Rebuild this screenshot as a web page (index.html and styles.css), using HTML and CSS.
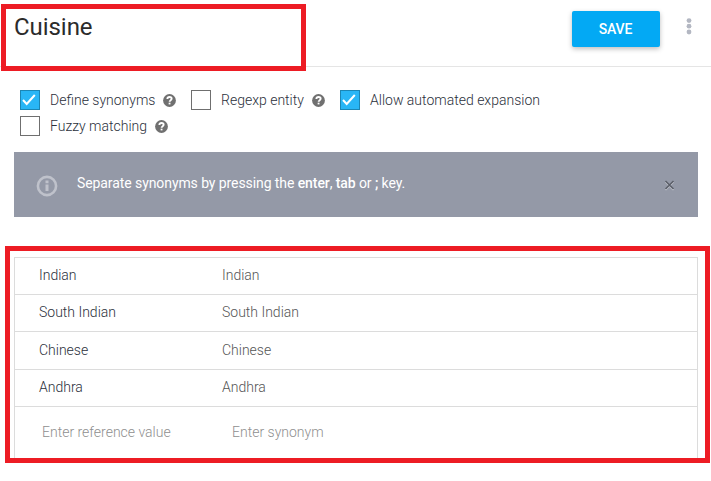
FILE: index.html
```html
<!DOCTYPE html>
<html lang="en">
<head>
<meta charset="utf-8">
<title>Cuisine</title>
<link rel="stylesheet" href="styles.css">
</head>
<body>
<svg class="defs" width="0" height="0" aria-hidden="true">
  <symbol id="help" viewBox="0 0 12 12"><circle cx="6" cy="6" r="5.9" fill="#707070"/><path d="M4 4.6C4.1 3.3 4.9 2.8 6 2.8c1.2 0 2 .6 2 1.6C8 5.7 6.1 5.7 6.1 7.2" fill="none" stroke="#fff" stroke-width="1.7"/><path d="M5.2 8h1.7v1.6H5.2z" fill="#fff"/></symbol>
  <symbol id="check" viewBox="0 0 18 18"><path d="M2 9l3.7 4L13.8 4" fill="none" stroke="#fff" stroke-width="2"/></symbol>
</svg>
<header class="header">
  <h1 class="title">Cuisine</h1>
  <button class="save">SAVE</button>
  <svg class="more" width="6" height="18" viewBox="0 0 6 18" fill="#b3b7c2"><circle cx="3" cy="2.6" r="2.4"/><circle cx="3" cy="8.2" r="2.4"/><circle cx="3" cy="14" r="2.4"/></svg>
</header>
<main class="content">
  <div class="options">
    <div class="option option-synonyms"><span class="box checked"><svg width="18" height="18"><use href="#check"/></svg></span><span>Define synonyms</span><svg class="help" width="13" height="13"><use href="#help"/></svg></div>
    <div class="option option-regexp"><span class="box"></span><span>Regexp entity</span><svg class="help" width="13" height="13"><use href="#help"/></svg></div>
    <div class="option option-expansion"><span class="box checked"><svg width="18" height="18"><use href="#check"/></svg></span><span>Allow automated expansion</span></div>
    <div class="option"><span class="box"></span><span>Fuzzy matching</span><svg class="help" width="13" height="13"><use href="#help"/></svg></div>
  </div>
  <div class="notice">
    <svg width="22" height="22" viewBox="0 0 22 22"><circle cx="11" cy="11" r="9.1" fill="none" stroke="#bfc2cb" stroke-width="2.6"/><path d="M9.5 5.6h3v2.6h-3zM9.5 9.6h3v6.3h-3z" fill="#bfc2cb"/></svg>
    <p class="notice-text">Separate synonyms by pressing the <b>enter</b>, <b>tab</b> or <b>;</b> key.</p>
    <svg class="close" width="12" height="13" viewBox="0 0 12 13" fill="none" stroke-width="1.5"><path d="M1.5 3l8 8M9.5 3l-8 8" stroke="#c3c6ce"/><path d="M1.5 2l8 8M9.5 2l-8 8" stroke="#595d67"/></svg>
  </div>
  <div class="entries">
    <div class="row"><span>Indian</span><span class="synonym">Indian</span></div>
    <div class="row"><span>South Indian</span><span class="synonym">South Indian</span></div>
    <div class="row tall"><span>Chinese</span><span class="synonym">Chinese</span></div>
    <div class="row"><span>Andhra</span><span class="synonym">Andhra</span></div>
    <div class="row entry-new"><span>Enter reference value</span><span>Enter synonym</span></div>
  </div>
</main>
<div class="highlight highlight-title"></div>
<div class="highlight highlight-entries"></div>
</body>
</html>
```
FILE: styles.css
```css
* { box-sizing: border-box; }
body {
  margin: 0;
  height: 481px;
  position: relative;
  overflow: hidden;
  background: #fff;
  color: #2b303b;
  font: 300 14px/20px Roboto, sans-serif;
}
.defs { position: absolute; }
.header {
  display: flex;
  align-items: flex-start;
  height: 67px;
  padding: 11px 19px 0 14px;
  border-bottom: 1px solid #e5e5e5;
}
.title {
  flex: 1;
  margin: 0;
  color: #2b2b2b;
  font-size: 24px;
  line-height: 32px;
  font-weight: 400;
  letter-spacing: -.05px;
}
.save {
  width: 88px;
  height: 36px;
  padding: 0 1px 0 0;
  border: 0;
  border-radius: 2px;
  background: #03a9f4;
  box-shadow: 0 2px 5px rgba(0, 0, 0, .26);
  color: #fff;
  font: 500 14px/34px Roboto, sans-serif;
  letter-spacing: -.1px;
}
.more { margin: 7px 0 0 26px; }
.content { padding: 23px 13px 0 14px; }
.options {
  display: flex;
  flex-wrap: wrap;
  row-gap: 6px;
  padding-left: 6px;
}
.option {
  display: flex;
  align-items: center;
  height: 20px;
  white-space: nowrap;
}
.option-synonyms { width: 171px; }
.option-regexp { width: 149px; }
.option-expansion { width: 300px; }
.box {
  width: 20px;
  height: 20px;
  margin-right: 10px;
  border: 1px solid #6f6f6f;
}
.checked { background: #29b6f6; border-color: #1c86b5; }
.box svg { display: block; }
.help { margin-left: 8px; }
.notice {
  display: flex;
  align-items: flex-start;
  height: 65px;
  margin-top: 16px;
  padding: 23px 22px 0;
  background: #9499a7;
  color: #fff;
}
.notice-text {
  flex: 1;
  margin: -2px 0 0 19px;
  font-weight: 400;
  letter-spacing: -.085px;
}
.notice b { font-weight: 500; }
.close { margin-top: 4px; }
.entries {
  height: 205px;
  margin-top: 40px;
  border: 1px solid #dcdcdc;
}
.row {
  display: grid;
  grid-template-columns: 183px 1fr;
  height: 37px;
  padding: 7px 24px 0;
  border-bottom: 1px solid #dcdcdc;
}
.tall { height: 38px; padding-top: 8px; }
.synonym { color: #555; }
.entry-new {
  grid-template-columns: 190px 1fr;
  height: 54px;
  padding: 15px 27px 0;
  border: 0;
  color: #8f8f8f;
}
/* Annotation frames drawn over the page */
.highlight { position: absolute; border: 5px solid #ed1c24; }
.highlight-title { left: 1px; top: 4px; width: 305px; height: 67px; }
.highlight-entries { left: 5px; top: 246px; width: 705px; height: 217px; }
```
